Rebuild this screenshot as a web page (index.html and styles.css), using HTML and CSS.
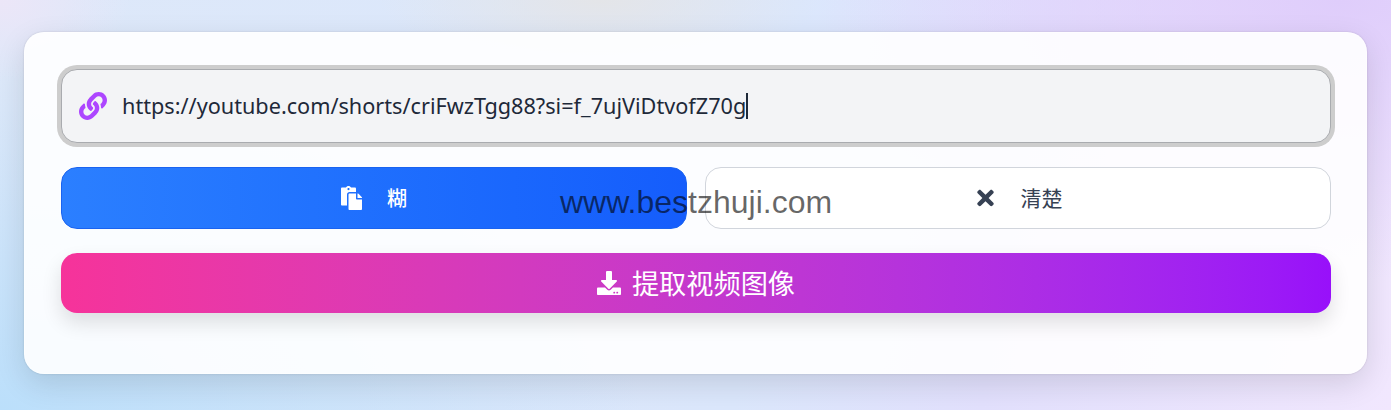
FILE: index.html
```html
<!DOCTYPE html>
<html lang="zh">
<head>
<meta charset="utf-8">
<title>提取视频图像</title>
<link rel="stylesheet" href="styles.css">
</head>
<body>
<main class="card">
  <div class="url-field">
    <svg class="icon link-icon" viewBox="0 0 512 512"><path d="M326.612 185.391c59.747 59.809 58.927 155.698.36 214.59-.11.12-.24.25-.36.37l-67.2 67.2c-59.27 59.27-155.699 59.262-214.96 0-59.27-59.26-59.27-155.7 0-214.96l37.106-37.106c9.84-9.84 26.786-3.3 27.294 10.606.648 17.722 3.826 35.527 9.69 52.721 1.986 5.822.567 12.262-3.783 16.612l-13.087 13.087c-28.026 28.026-28.905 73.66-1.155 101.96 28.024 28.579 74.086 28.749 102.325.51l67.2-67.19c28.191-28.191 28.073-73.757 0-101.83-3.701-3.694-7.429-6.564-10.341-8.569a16.037 16.037 0 0 1-6.947-12.606c-.396-10.567 3.348-21.456 11.698-29.806l21.054-21.055c5.521-5.521 14.182-6.199 20.584-1.731a152.482 152.482 0 0 1 20.522 17.197zM467.547 44.449c-59.261-59.262-155.69-59.27-214.96 0l-67.2 67.2c-.12.12-.25.25-.36.37-58.566 58.892-59.387 154.781.36 214.59a152.454 152.454 0 0 0 20.521 17.196c6.402 4.468 15.064 3.789 20.584-1.731l21.054-21.055c8.35-8.35 12.094-19.239 11.698-29.806a16.037 16.037 0 0 0-6.947-12.606c-2.912-2.005-6.64-4.875-10.341-8.569-28.073-28.073-28.191-73.639 0-101.83l67.2-67.19c28.239-28.239 74.3-28.069 102.325.51 27.75 28.3 26.872 73.934-1.155 101.96l-13.087 13.087c-4.35 4.35-5.769 10.79-3.783 16.612 5.864 17.194 9.042 34.999 9.69 52.721.509 13.906 17.454 20.446 27.294 10.606l37.106-37.106c59.271-59.259 59.271-155.699.001-214.959z"/></svg>
    <span class="url-text">https://youtube.com/shorts/criFwzTgg88?si=f_7ujViDtvofZ70g</span><span class="caret"></span>
  </div>
  <div class="actions">
    <button class="btn btn-paste">
      <svg class="icon paste-icon" viewBox="0 0 448 512"><path d="M128 184c0-30.879 25.122-56 56-56h136V56c0-13.255-10.745-24-24-24h-80.61C204.306 12.89 183.637 0 160 0s-44.306 12.89-55.39 32H24C10.745 32 0 42.745 0 56v336c0 13.255 10.745 24 24 24h104V184zm32-144c13.255 0 24 10.745 24 24s-10.745 24-24 24-24-10.745-24-24 10.745-24 24-24zm184 248h104v200c0 13.255-10.745 24-24 24H184c-13.255 0-24-10.745-24-24V184c0-13.255 10.745-24 24-24h136v104c0 13.2 10.8 24 24 24zm104-38.059V256h-96v-96h6.059a24 24 0 0 1 16.97 7.029l65.941 65.941a24.002 24.002 0 0 1 7.03 16.971z"/></svg>
      <span class="label">糊</span>
    </button>
    <button class="btn btn-clear">
      <svg class="icon clear-icon" viewBox="0 0 352 512"><path d="M242.72 256l100.07-100.07c12.28-12.28 12.28-32.19 0-44.48l-22.24-22.24c-12.28-12.28-32.19-12.28-44.48 0L176 189.28 75.93 89.21c-12.28-12.28-32.19-12.28-44.48 0L9.21 111.45c-12.28 12.28-12.28 32.19 0 44.48L109.28 256 9.21 356.07c-12.28 12.28-12.28 32.19 0 44.48l22.24 22.24c12.28 12.28 32.2 12.28 44.48 0L176 322.72l100.07 100.07c12.28 12.28 32.2 12.28 44.48 0l22.24-22.24c12.28-12.28 12.28-32.19 0-44.48L242.72 256z"/></svg>
      <span class="label">清楚</span>
    </button>
  </div>
  <button class="extract">
    <svg class="icon download-icon" viewBox="0 0 512 512"><path d="M216 0h80c13.3 0 24 10.7 24 24v168h87.7c17.8 0 26.7 21.5 14.1 34.1L269.7 378.3c-7.5 7.5-19.8 7.5-27.3 0L90.1 226.1c-12.6-12.6-3.7-34.1 14.1-34.1H192V24c0-13.3 10.7-24 24-24zm296 376v112c0 13.3-10.7 24-24 24H24c-13.3 0-24-10.7-24-24V376c0-13.3 10.7-24 24-24h146.7l49 49c20.1 20.1 52.5 20.1 72.6 0l49-49H488c13.3 0 24 10.7 24 24zm-124 88c0-11-9-20-20-20s-20 9-20 20 9 20 20 20 20-9 20-20zm64 0c0-11-9-20-20-20s-20 9-20 20 9 20 20 20 20-9 20-20z"/></svg>
    <span class="label">提取视频图像</span>
  </button>
</main>
<div class="watermark">www.bestzhuji.com</div>
</body>
</html>
```
FILE: styles.css
```css
* { box-sizing: border-box; }
html, body { height: 100%; margin: 0; }
body {
  position: relative;
  overflow: hidden;
  padding: 32px 24px 36px;
  font-family: "Noto Sans", "Noto Sans CJK SC", sans-serif;
  background:
    radial-gradient(ellipse 220px 70px at 600px 0, #e4e5e8 0%, rgba(228,229,232,0) 100%),
    radial-gradient(ellipse 520px 280px at 1340px 0, #dfcdfb 0%, rgba(223,205,251,0) 100%),
    radial-gradient(ellipse 640px 340px at 0 410px, #bbdffb 0%, rgba(187,223,251,0) 100%),
    radial-gradient(ellipse 130px 80px at 0 0, #ece6f8 0%, rgba(236,230,248,0) 100%),
    linear-gradient(100deg, #dde8f9 0%, #dbe7fc 55%, #e2e0fd 72%, #f1e7fe 100%);
}
.card {
  display: flex;
  flex-direction: column;
  height: 342px;
  padding: 36px 35px 60px 36px;
  background: rgba(255, 255, 255, 0.9);
  border: 1px solid rgba(255, 255, 255, 0.4);
  border-radius: 20px;
  box-shadow: 0 10px 30px rgba(0, 0, 0, 0.12), 0 0 2px rgba(0, 0, 0, 0.16);
}
.icon { display: block; flex: none; fill: currentColor; }
.label { padding-bottom: 2px; }
.url-field {
  display: flex;
  align-items: center;
  height: 74px;
  padding: 0 0 2px 17px;
  background: #f3f4f6;
  border: 1px solid #a9abaf;
  border-radius: 16px;
  box-shadow: 0 0 0 4px #cdcdcd;
}
.link-icon { width: 28px; height: 28px; margin-top: 2px; color: #ad46ff; }
.url-text {
  margin-left: 15px;
  font-size: 21.67px;
  color: #1e2939;
  white-space: nowrap;
}
.caret { width: 2px; height: 26px; margin-top: 2px; background: #1e2939; }
.actions {
  display: grid;
  grid-template-columns: 1fr 1fr;
  gap: 18px;
  margin-top: 24px;
}
.btn {
  display: flex;
  align-items: center;
  justify-content: center;
  height: 62px;
  padding: 0;
  border-radius: 16px;
  font-family: inherit;
}
.btn-paste {
  gap: 25px;
  color: #fff;
  font-size: 20px;
  font-weight: 500;
  background: linear-gradient(to right in oklab, #2b7fff, #155dfc);
  border: 1px solid #1a63f0;
}
.btn-clear {
  gap: 27px;
  padding-left: 3px;
  color: #364153;
  font-size: 21px;
  background: #fff;
  border: 1px solid #d1d5dc;
}
.paste-icon { width: 21px; height: 24px; }
.clear-icon { width: 17px; height: 24px; }
.extract {
  display: flex;
  align-items: center;
  justify-content: center;
  gap: 11px;
  height: 60px;
  padding: 0;
  margin-top: 24px;
  color: #fff;
  font-family: inherit;
  font-size: 27.2px;
  font-weight: 400;
  background: linear-gradient(to right in oklab, #f6339a, #9810fa);
  border: 0;
  border-radius: 16px;
  box-shadow: 0 10px 20px rgba(0, 0, 0, 0.12);
}
.download-icon { width: 24px; height: 24px; }
.watermark {
  position: absolute;
  left: 560px;
  top: 183px;
  font-family: "Liberation Sans", Arial, sans-serif;
  font-size: 32px;
  line-height: 38px;
  color: rgba(0, 0, 0, 0.6);
  white-space: nowrap;
}
```
